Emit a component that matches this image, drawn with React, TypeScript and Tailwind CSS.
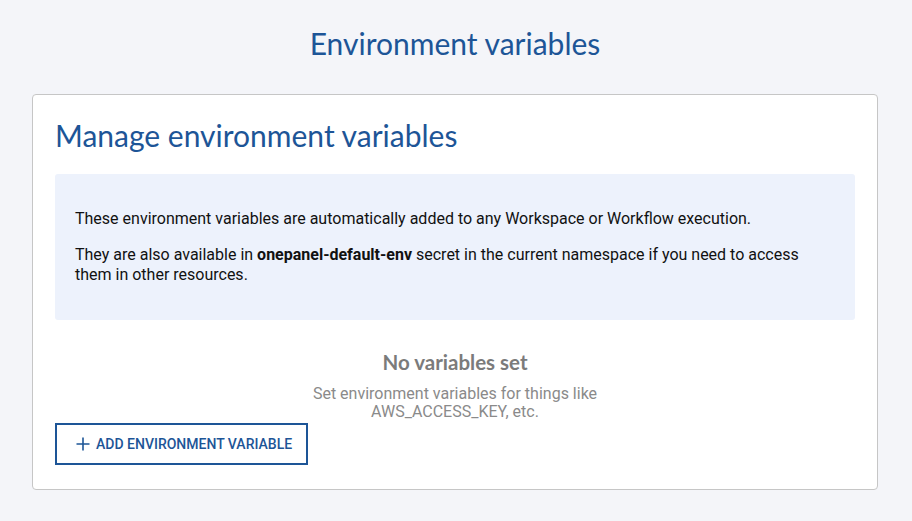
import React from 'react';

export default function App() {
  return (
    <div className="min-h-[521px] bg-[#f4f5f9] pl-8 pr-[34px] pt-[25px] pb-8 font-['Roboto',sans-serif]">
      <h1 className="text-center font-['Lato',sans-serif] text-[30px] leading-9 text-[#1d5597]">
        Environment variables
      </h1>

      <div className="mt-[33px] rounded border border-[#c6c6c6] bg-white px-[22px] pt-[22px] pb-6">
        <h2 className="font-['Lato',sans-serif] text-[30px] leading-9 text-[#1d5597]">
          Manage environment variables
        </h2>

        <div className="mt-[21px] rounded-[3px] bg-[#edf2fc] px-5 pt-[35px] pb-[35px] text-base leading-5 text-[#111]">
          <p>These environment variables are automatically added to any Workspace or Workflow execution.</p>
          <p className="mt-4">
            They are also available in <span className="font-bold">onepanel-default-env</span> secret in the
            current namespace if you need to access them in other resources.
          </p>
        </div>

        <div className="mt-[28px] flex flex-col items-center">
          <div className="font-['Lato',sans-serif] text-[20.5px] leading-7 font-bold text-[#7b7b7b]">No variables set</div>
          <div className="mt-[9px] text-center text-base leading-[18px] text-[#8a8a8a]">
            Set environment variables for things like
            <br />
            AWS_ACCESS_KEY, etc.
          </div>
        </div>

        <button className="mt-[2px] flex h-[42px] items-center gap-[6px] border-2 border-[#1d5597] pl-[19px] pr-[14px] text-sm font-medium text-[#1d5597]">
          <svg width="14" height="14" viewBox="0 0 14 14" fill="none" stroke="currentColor" strokeWidth="1.6">
            <path d="M7 0.5v13M0.5 7h13" />
          </svg>
          ADD ENVIRONMENT VARIABLE
        </button>
      </div>
    </div>
  );
}
